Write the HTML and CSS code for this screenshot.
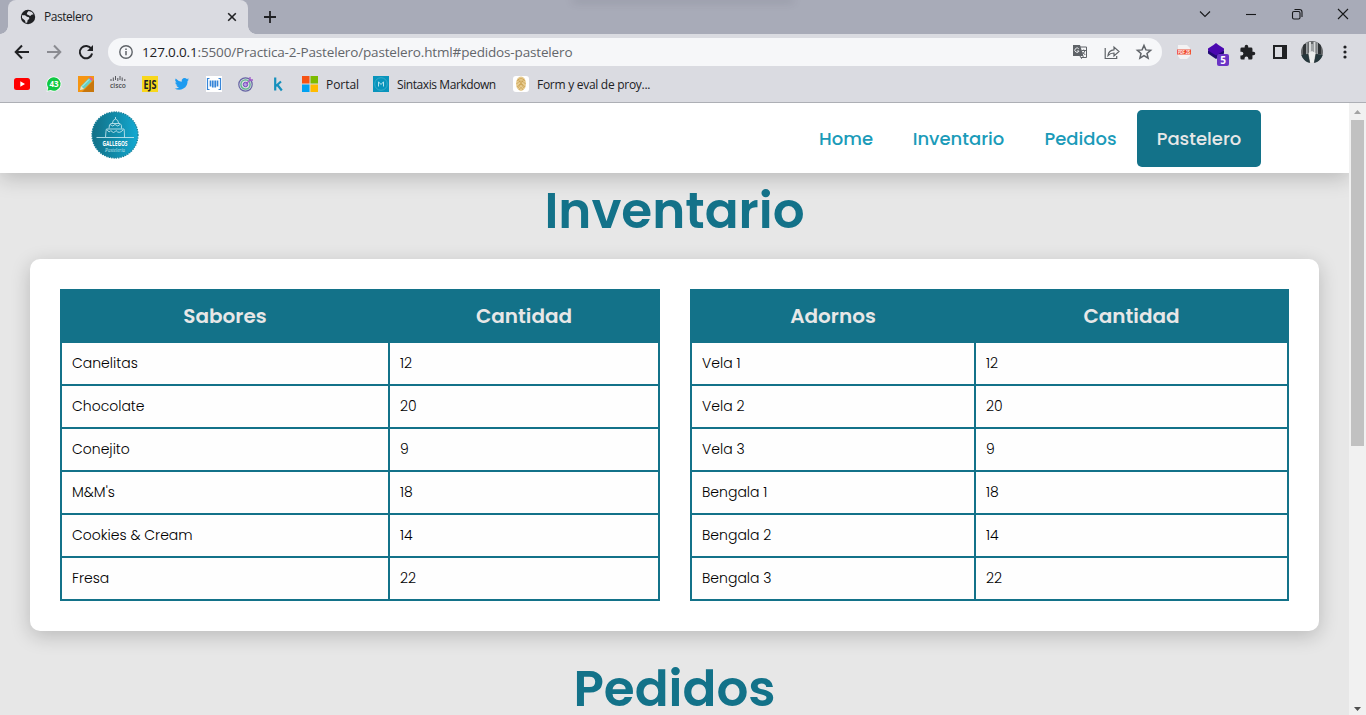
FILE: index.html
```html
<!DOCTYPE html>
<html lang="es">
<head>
<meta charset="utf-8">
<title>Pastelero</title>
<link rel="stylesheet" href="styles.css">
</head>
<body>
<div class="tabstrip">
  <div class="tab">
    <svg class="globe" viewBox="0 0 16 16"><circle cx="8" cy="8" r="7.2" fill="#202124"/><path d="M2 6.2l3 .1 2 1.4 2 .6.3 1.6-1.6 1.2-.5 2.3-1.5.6-.7-2.4L2 9zM8.6 2l3.2.9 1.8 2.3-2 .6-1.4 1.2-1.8-1-1.6-.8.3-1.4z" fill="#dadbe1"/></svg>
    <span class="tab-title">Pastelero</span>
    <svg class="tab-close" viewBox="0 0 10 10"><path d="M1.200 1.200l7.600 7.600M8.800 1.200L1.200 8.800" stroke="#202124" stroke-width="1.600"/></svg>
  </div>
  <svg class="newtab" viewBox="0 0 14 14"><path d="M7 1v12M1 7h12" stroke="#202124" stroke-width="1.8"/></svg>
  <div class="topline"></div>
  <div class="winctl">
    <svg viewBox="0 0 12 12"><path d="M1 3.5l5 5 5-5"/></svg>
    <svg viewBox="0 0 12 12"><path d="M1 6.5h10"/></svg>
    <svg viewBox="0 0 12 12"><rect x="1.5" y="3.5" width="7.500" height="7.500" rx="1.5"/><path d="M3.5 1.5h5q2.5 0 2.5 2.5v5"/></svg>
    <svg viewBox="0 0 12 12"><path d="M1 1l10 10M11 1L1 11"/></svg>
  </div>
</div>
<div class="toolbar">
  <svg class="nav-ic" viewBox="0 0 16 16"><path d="M15 8H2M8 1.5L1.7 8 8 14.500" stroke="#202124"/></svg>
  <svg class="nav-ic" viewBox="0 0 16 16"><path d="M1 8h13M8 1.500L14.300 8 8 14.500" stroke="#8a8b91"/></svg>
  <svg class="nav-ic" viewBox="0 0 16 16"><path d="M13.300 4.800A6.200 6.200 0 1 0 14.100 9.500" stroke="#202124"/><path d="M15 1v6H9z" fill="#202124" stroke="none"/></svg>
  <div class="omnibox">
    <svg class="info" viewBox="0 0 14 14"><circle cx="7" cy="7" r="6.200" fill="none" stroke="#5f6368" stroke-width="1.400"/><path d="M7 6v4.300M7 3.500v1.500" stroke="#5f6368" stroke-width="1.500"/></svg>
    <span class="url"><b>127.0.0.1</b>:5500/Practica-2-Pastelero/pastelero.html#pedidos-pastelero</span>
    <span class="omni-icons">
      <svg viewBox="0 0 16 16"><path d="M7 3h7.500v10.500H9" fill="none" stroke="#5f6368"/><path d="M1 1h7l3.500 11H1z" fill="#5f6368"/><path d="M6.800 4.800a2.200 2.200 0 1 0 .3 2.200H5" fill="none" stroke="#e8eaed"/><path d="M9.500 6.500h4.500M11.700 5.500v1M13 6.500q-.5 2.500-3 4M10.500 8l2.800 3M8 12l1.500 2.500 2-2.500" fill="none" stroke="#5f6368"/></svg>
      <svg viewBox="0 0 16 16"><path d="M1.200 4v10.500h11.500V12M4 11.500c.5-4 2.500-5.500 6-5.700V3l5 4.500-5 4.500V9c-3 0-4.500.8-6 2.500z" fill="none" stroke="#5f6368" stroke-width="1.200"/></svg>
      <svg viewBox="0 0 16 16"><path d="M8 1.500l1.900 4.400 4.700.4-3.600 3.100 1.100 4.700L8 11.600l-4.100 2.500L5 9.400 1.400 6.300l4.700-.4z" fill="none" stroke="#5f6368" stroke-width="1.500"/></svg>
    </span>
  </div>
  <svg class="ext pdf" viewBox="0 0 16 16"><path d="M2 1h9l3 3v8l-3 3H4l-2-3z" fill="#f3f2f3"/><rect x="1" y="5.500" width="14" height="5" fill="#ef4b32"/><text x="2" y="9.600" font-size="4.500" textLength="12" lengthAdjust="spacingAndGlyphs" class="pdf-t">PDF JS</text></svg>
  <div class="ext layers">
    <svg viewBox="0 0 18 18"><path d="M1 7.500v3L9 16l8-5.500v-3z" fill="#210b73"/><path d="M9 0l2.500 2L17 5.500v2L9 12.500 1 7.500v-2L6.500 2z" fill="#4b08b0"/></svg>
    <span class="count">5</span>
  </div>
  <svg class="ext puzzle" viewBox="0 0 24 24"><path fill="#202124" d="M20.500 11H19V7a2 2 0 0 0-2-2h-4V3.500a2.500 2.500 0 0 0-5 0V5H4a2 2 0 0 0-2 2v3.800h1.500a2.700 2.700 0 0 1 0 5.400H2V20a2 2 0 0 0 2 2h3.800v-1.500a2.700 2.700 0 0 1 5.400 0V22H17a2 2 0 0 0 2-2v-4h1.500a2.500 2.500 0 0 0 0-5z"/></svg>
  <svg class="ext side" viewBox="0 0 14 14"><rect x="1" y="1" width="12" height="12" fill="none" stroke="#202124" stroke-width="2"/><path d="M9 0h5v14H9z" fill="#202124"/></svg>
  <svg class="ext avatar" viewBox="0 0 22 22"><defs><clipPath id="av"><circle cx="11" cy="11" r="11"/></clipPath></defs><g clip-path="url(#av)"><path d="M0 0h22v22H0z" fill="#65686a"/><path d="M2 3h3v11H2zM17 2h3v11h-3z" fill="#2f3336"/><path d="M5 1h1.500v12H5zM15.500 1H17v12h-1.500z" fill="#9a9ea1"/><path d="M8 1h2v12H8zM12.500 1h2v12h-2z" fill="#d9dbdc"/><path d="M10 3h2.500v9H10z" fill="#a0a4a6"/><path d="M7.500 12l3.500-2 3.500 2-1.500 10H9z" fill="#eceded"/><path d="M0 14l7-1 2 9H0zM15 13l7 1v8h-9z" fill="#25373c"/></g></svg>
  <svg class="ext dots" viewBox="0 0 4 16"><circle cx="2" cy="3" r="1.600"/><circle cx="2" cy="8" r="1.600"/><circle cx="2" cy="13" r="1.600"/></svg>
</div>
<div class="bookmarks">
  <svg viewBox="0 0 16 16"><rect y="2" width="16" height="12" rx="2.500" fill="#f00"/><path d="M6.300 5.300v5.400L11 8z" fill="#fff"/></svg>
  <svg viewBox="0 0 16 16"><path d="M8 .5a7.500 7.500 0 1 1-3.500 14.200L.5 15.800l1-4A7.500 7.500 0 0 1 8 .5z" fill="#fff"/><path d="M8 1.200A6.800 6.800 0 1 1 4.600 14L1.500 14.800l.8-3A6.800 6.800 0 0 1 8 1.200z" fill="#10c843"/><text x="8" y="10.900" font-size="8" class="wa-t">43</text></svg>
  <svg viewBox="0 0 16 16"><path d="M0 0h16v16H0z" fill="#f59512"/><path d="M16 4v12H4z" fill="#c8770c"/><path d="M2 14l1-4 8-8 3 3-8 8z" fill="#66cfc4"/><path d="M2 14l1-4 3 3z" fill="#f6e2bd"/><path d="M11 2l1.500-1L15 3.500 14 5z" fill="#dc5aa5"/><path d="M4 10.500l7-7" stroke="#c6f1e9"/></svg>
  <svg viewBox="0 0 16 16"><path d="M1 3v2M3.300 1.500V5M5.500 0v4M7.800 2v3M10 0v4M12.200 1.500V5M14.800 3v2" stroke="#55565a" stroke-width="1"/><text x="0" y="11.500" font-size="7.500" textLength="16" lengthAdjust="spacingAndGlyphs" class="cisco-t">cisco</text></svg>
  <svg viewBox="0 0 16 16"><path d="M0 0h16v16H0z" fill="#f8d71c"/><text x="1.500" y="12.900" font-size="13" textLength="13" lengthAdjust="spacingAndGlyphs" class="ejs-t">EJS</text></svg>
  <svg viewBox="0 0 24 24"><path fill="#1d9bf0" d="M22.600 5.100a8.600 8.600 0 0 1-2.500.7 4.400 4.400 0 0 0 1.900-2.400 8.700 8.700 0 0 1-2.800 1.100 4.400 4.400 0 0 0-7.600 4A12.500 12.500 0 0 1 2.600 3.900a4.400 4.400 0 0 0 1.300 5.900 4.400 4.400 0 0 1-2-.5 4.400 4.400 0 0 0 3.500 4.400 4.400 4.400 0 0 1-2 .1 4.400 4.400 0 0 0 4.100 3.100A8.900 8.900 0 0 1 1 18.600 12.500 12.500 0 0 0 20.300 7.400a9 9 0 0 0 2.300-2.300z"/></svg>
  <svg viewBox="0 0 16 16"><path d="M0 0h16v16H0z" fill="#fff"/><path d="M3.500 2.500h-2v11h2M12.500 2.500h2v11h-2" fill="none" stroke="#3685d8" stroke-width="1.200"/><path d="M4.500 4.500v6M6.800 4.500v7M9.200 4.500v7M11.500 4.500v6" fill="none" stroke="#3685d8" stroke-width="1.700"/></svg>
  <svg viewBox="0 0 16 16"><circle cx="7.500" cy="8.500" r="6.700" fill="none" stroke="#6564a4" stroke-width="1.200"/><circle cx="7.500" cy="8.500" r="4.600" fill="none" stroke="#59b38c" stroke-width="1.300"/><circle cx="7.500" cy="8.500" r="2.200" fill="#b4a3df" stroke="#7046c0"/><path d="M8 8l4-4M12 1v3h3" stroke="#a15bca" fill="none" stroke-width="1.300"/></svg>
  <svg viewBox="0 0 16 16"><path d="M5.200 1.500v13M11 5.500L6 10M7.500 9l4.300 5.500" stroke="#1590bd" stroke-width="2.200" fill="none"/></svg>
  <span class="bm bm-portal"><svg viewBox="0 0 16 16"><path d="M0 0h7.500v7.500H0z" fill="#f65314"/><path d="M8.500 0H16v7.500H8.500z" fill="#7cbb00"/><path d="M0 8.500h7.500V16H0z" fill="#00a1f1"/><path d="M8.500 8.500H16V16H8.500z" fill="#ffbb00"/></svg><span>Portal</span></span>
  <span class="bm bm-md"><svg viewBox="0 0 16 16"><path d="M0 0h16v16H0z" fill="#0894bc"/><circle cx="8" cy="8" r="6.300" fill="none" stroke="#43b1cd" stroke-width=".8"/><path d="M5.500 10.500V5.800L8 8.500l2.500-2.700v4.700" stroke="#b5e3ee" fill="none"/></svg><span>Sintaxis Markdown</span></span>
  <span class="bm bm-form"><svg viewBox="0 0 16 16"><rect width="16" height="16" rx="3" fill="#fff"/><ellipse cx="8" cy="7.700" rx="5" ry="7.200" fill="#e8cc91"/><path d="M4 5q4-5 8 0M3.500 8q4.500-6 9 0M4 11q4-6 8 0M6 14q2-5 4 0M5 3l6 9M11 3l-6 9" fill="none" stroke="#c89d4c" stroke-width=".7"/></svg><span>Form y eval de proy...</span></span>
</div>
<div class="viewport">
  <div class="page">
    <header class="navbar">
      <svg class="logo" viewBox="0 0 48 48"><defs><linearGradient id="lg"><stop offset="0" stop-color="#137087"/><stop offset=".5" stop-color="#118ba9"/><stop offset="1" stop-color="#14a9d2"/></linearGradient></defs><circle cx="24" cy="24" r="23" fill="url(#lg)"/><circle cx="24" cy="24" r="23" fill="none" stroke="#177f99" stroke-width="1.300" stroke-dasharray="1.400 1.010"/><g fill="none" stroke="#bfe3ec" stroke-width=".9"><path d="M5.500 26.500h9M33 26.500h10M14.500 26.500q.5-8 1-8.500h17.500q.5 2 .5 8.500zM16 18.500q2 4 4 1 2.500 4 5 0 3 4 7-.5M18 17.500q0-5 2-5h9q2 1 1.500 5M19 13.500q3 3 5 0 3 3 5 0M21.500 12q0-3 3-4 3 1 3 4M24.500 8V6"/></g><text x="11.500" y="34.600" font-size="7.500" textLength="25" lengthAdjust="spacingAndGlyphs" class="logo-t">GALLEGOS</text><text x="14" y="40.500" font-size="6" textLength="20" lengthAdjust="spacingAndGlyphs" class="logo-s">Pastelería</text></svg>
      <nav class="menu">
        <a class="m-home">Home</a><a class="m-inv">Inventario</a><a class="m-ped">Pedidos</a><a class="m-pas active">Pastelero</a>
      </nav>
    </header>
    <h1 class="t-inv">Inventario</h1>
    <section class="card">
      <table class="stock stock-a">
        <thead><tr><th>Sabores</th><th class="qty">Cantidad</th></tr></thead>
        <tbody>
          <tr><td>Canelitas</td><td>12</td></tr>
          <tr><td>Chocolate</td><td>20</td></tr>
          <tr><td>Conejito</td><td>9</td></tr>
          <tr><td>M&amp;M's</td><td>18</td></tr>
          <tr><td>Cookies &amp; Cream</td><td>14</td></tr>
          <tr><td>Fresa</td><td>22</td></tr>
        </tbody>
      </table>
      <table class="stock stock-b">
        <thead><tr><th>Adornos</th><th class="qty">Cantidad</th></tr></thead>
        <tbody>
          <tr><td>Vela 1</td><td>12</td></tr>
          <tr><td>Vela 2</td><td>20</td></tr>
          <tr><td>Vela 3</td><td>9</td></tr>
          <tr><td>Bengala 1</td><td>18</td></tr>
          <tr><td>Bengala 2</td><td>14</td></tr>
          <tr><td>Bengala 3</td><td>22</td></tr>
        </tbody>
      </table>
    </section>
    <h1 class="t-ped">Pedidos</h1>
  </div>
  <div class="scrollbar">
    <svg viewBox="0 0 17 17"><path d="M5 11l3.500-4 3.500 4z" fill="#a3a3a3"/></svg>
    <div class="thumb"></div>
    <svg class="down" viewBox="0 0 17 17"><path d="M5 9h7l-3.500 4z" fill="#505050"/></svg>
  </div>
</div>
</body>
</html>
```

FILE: styles.css
```css
* { box-sizing: border-box; }
body {
  margin: 0;
  width: 1366px;
  height: 715px;
  overflow: hidden;
  font-family: "Poppins", Inter, sans-serif;
  background: #e7e7e7;
}
svg { display: block; flex: none; overflow: visible; }

/* Browser frame */
.tabstrip, .toolbar, .bookmarks {
  display: flex;
  align-items: center;
  font-family: "Open Sans", "Noto Sans", sans-serif;
  font-size: 12px;
  color: #202124;
}
.tabstrip { height: 34px; background: #a8abb8; padding-left: 8px; position: relative; }
.tab {
  width: 240px;
  height: 34px;
  padding: 0 11px 0 12px;
  display: flex;
  align-items: center;
  background: #dadbe1;
  border-radius: 8px 8px 0 0;
  position: relative;
}
.tab::before, .tab::after {
  content: "";
  position: absolute;
  bottom: 0;
  width: 8px;
  height: 8px;
}
.tab::before { left: -8px; background: radial-gradient(circle at 0 0, transparent 7.500px, #dadbe1 8px); }
.tab::after { right: -8px; background: radial-gradient(circle at 100% 0, transparent 7.500px, #dadbe1 8px); }
.globe { width: 16px; height: 16px; }
.tab-title { margin: -2px 0 0 8px; font-size: 12px; letter-spacing: -.45px; flex: 1; }
.tab-close { width: 10px; height: 10px; }
.newtab { width: 14px; height: 14px; margin-left: 15px; }
.topline {
  position: absolute;
  left: 573px;
  top: -2px;
  width: 220px;
  height: 2px;
  box-shadow: 0 1px 8px rgba(60, 62, 75, .4);
}
.winctl { margin-left: auto; display: flex; gap: 34px; padding-right: 17px; margin-top: -6px; }
.winctl svg { width: 12px; height: 12px; fill: none; stroke: #17181a; stroke-width: 1.100; }

.toolbar { height: 36px; background: #dadbe1; padding-left: 14px; }
.nav-ic { width: 16px; height: 16px; margin-right: 16px; fill: none; stroke-width: 2; }
.omnibox {
  width: 1054px;
  height: 28px;
  margin-left: -2px;
  padding: 0 10px 0 11px;
  border-radius: 14px;
  background: #f6f7f9;
  display: flex;
  align-items: center;
}
.info { width: 14px; height: 14px; }
.url { margin-left: 9px; font-size: 13.500px; color: #63666b; letter-spacing: -.155px; white-space: nowrap; }
.url b { font-weight: 400; color: #202124; }
.omni-icons { margin-left: auto; display: flex; gap: 16px; }
.omni-icons svg { width: 16px; height: 16px; }
.pdf { width: 16px; height: 16px; margin-left: 14px; }
.pdf-t { fill: #fff; font-weight: 700; font-family: "Liberation Sans", sans-serif; }
.layers { width: 18px; height: 18px; margin-left: 15px; position: relative; }
.layers svg { width: 18px; height: 18px; }
.count {
  position: absolute;
  left: 10px;
  top: 11px;
  width: 12px;
  height: 12px;
  border-radius: 2px;
  background: #6b35c5;
  color: #fff;
  font-size: 10px;
  font-weight: 700;
  line-height: 12px;
  text-align: center;
}
.puzzle { width: 17px; height: 17px; margin-left: 14px; }
.side { width: 14px; height: 14px; margin-left: 17px; }
.avatar { width: 22px; height: 22px; margin-left: 14px; }
.dots { width: 4px; height: 16px; margin-left: 20px; fill: #202124; }

.bookmarks { height: 33px; background: #dadbe1; border-bottom: 1px solid #adafb5; padding: 0 0 4px 14px; gap: 16px; }
.bookmarks svg { width: 16px; height: 16px; }
.bm { display: flex; align-items: center; gap: 8px; white-space: nowrap; }
.bm-portal { width: 55px; letter-spacing: -.05px; }
.bm-md { width: 124px; letter-spacing: -.42px; }
.bm-form { letter-spacing: -.28px; }
.wa-t { fill: #fff; font-weight: 700; text-anchor: middle; letter-spacing: 0; }
.cisco-t { fill: #4a4b4f; font-weight: 600; }
.ejs-t { fill: #222; font-weight: 700; }

/* Web page */
.viewport { height: 612px; display: flex; }
.page { width: 1349px; height: 612px; overflow: hidden; background: #e7e7e7; }
.navbar {
  height: 70px;
  padding: 0 88px 0 91px;
  display: flex;
  align-items: center;
  justify-content: space-between;
  background: #fff;
  box-shadow: 0 5px 20px rgba(0, 0, 0, .2);
}
.logo { width: 48px; height: 48px; margin-top: -6px; }
.logo-t { fill: #fff; font-weight: 700; font-family: "Open Sans", sans-serif; }
.logo-s { fill: #b9e2ec; font-style: italic; font-family: "Liberation Serif", serif; }
.menu { display: flex; }
.menu a {
  height: 57px;
  line-height: 57px;
  text-align: center;
  font-size: 18px;
  font-weight: 500;
  color: #1b9bb9;
  border-radius: 5px;
}
.m-home { width: 94px; }
.m-inv { width: 131px; }
.m-ped { width: 113px; }
.m-pas { width: 124px; }
.menu .active { background: #137289; color: #e7e7e7; }

h1 {
  margin: 0;
  text-align: center;
  font-size: 50px;
  line-height: 76px;
  font-weight: 600;
  color: #137289;
}
.t-inv { padding-bottom: 10px; }
.card {
  margin: 0 30px 20px;
  height: 372px;
  padding: 30px;
  display: flex;
  gap: 30px;
  align-items: flex-start;
  background: #fff;
  border-radius: 10px;
  box-shadow: 0 5px 20px rgba(0, 0, 0, .2);
}
.stock { border-collapse: collapse; table-layout: fixed; }
.stock-a { width: 600px; }
.stock-b { width: 599px; }
.stock th, .stock td { border: 2px solid #137289; padding: 0 10px; }
.stock th { height: 52px; background: #137289; color: #e7e7e7; font-size: 20px; font-weight: 600; }
.stock td { height: 43px; background: #fefefe; color: #000; font-size: 14px; font-weight: 300; }
.stock-a .qty { width: 270px; }
.stock-b .qty { width: 313px; }

.scrollbar { width: 17px; background: #f1f1f1; display: flex; flex-direction: column; }
.scrollbar svg { width: 17px; height: 17px; }
.thumb { width: 13px; height: 326px; margin: 0 2px; background: #c1c1c1; }
.down { margin-top: auto; }
```
